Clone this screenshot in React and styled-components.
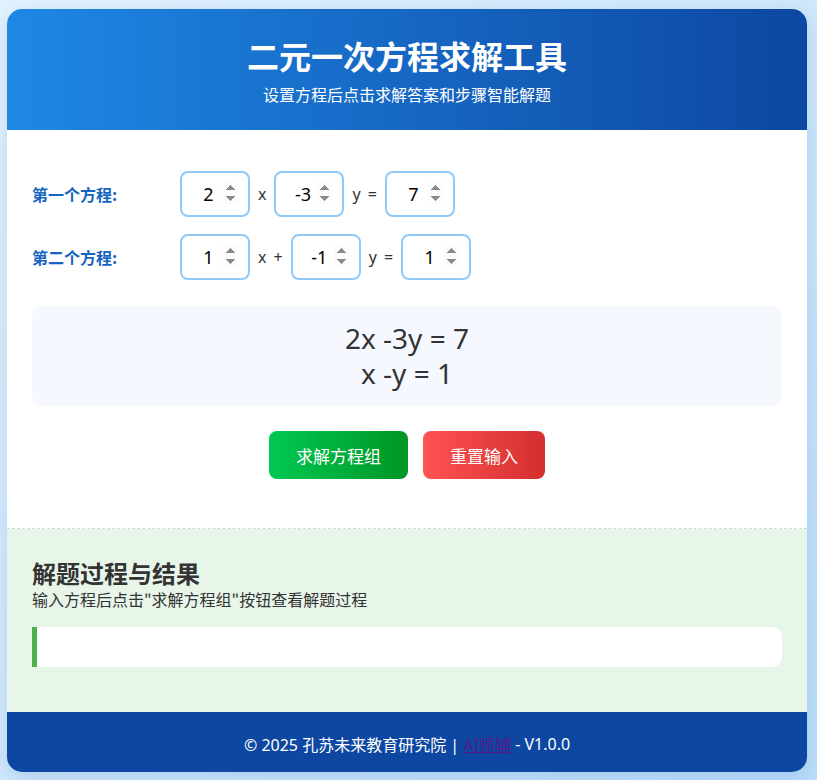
import React, { useState } from "react";
import styled, { createGlobalStyle } from "styled-components";

const GlobalStyle = createGlobalStyle`
  * { box-sizing: border-box; }
  html, body {
    margin: 0;
    padding: 0;
  }
  body {
    font-family: "Noto Sans", "Noto Sans CJK SC", sans-serif;
    background: linear-gradient(135deg, #e3f2fd 0%, #bbdefb 100%);
    min-height: 780px;
    color: #333;
  }
`;

const Page = styled.div`
  padding: 9px 10px 8px 7px;
`;

const Container = styled.div`
  width: 800px;
  background: #fff;
  border-radius: 15px;
  overflow: hidden;
  box-shadow: 0 6px 20px rgba(13, 71, 161, 0.15);
`;

const Header = styled.header`
  height: 121px;
  background: linear-gradient(90deg, #1e88e5 0%, #0d47a1 100%);
  color: #fff;
  text-align: center;
  display: flex;
  flex-direction: column;
  align-items: center;
  justify-content: center;
  padding-bottom: 3px;
`;

const Title = styled.h1`
  margin: 0;
  font-size: 32px;
  font-weight: 700;
  line-height: 48px;
  font-family: "Noto Sans CJK SC", sans-serif;
`;

const Subtitle = styled.p`
  margin: 3px 0 0;
  font-size: 16px;
  line-height: 24px;
  font-family: "Noto Sans CJK SC", sans-serif;
`;

const Main = styled.section`
  padding: 41px 25px 49px;
  display: flex;
  flex-direction: column;
  border-bottom: 1px dashed #d7d7d7;
`;

const Row = styled.div`
  display: flex;
  align-items: center;
  gap: 8px;
  margin-bottom: ${(p) => (p.$last ? "26px" : "17px")};
`;

const Label = styled.label`
  width: 140px;
  font-size: 16px;
  font-weight: 700;
  color: #1565c0;
  font-family: "Noto Sans CJK SC", sans-serif;
`;

const NumInput = styled.input`
  width: 70px;
  height: 46px;
  border: 2px solid #90caf9;
  border-radius: 8px;
  font-size: 18px;
  font-family: "Noto Sans", sans-serif;
  text-align: center;
  color: #000;
  padding: 0 10px 0 12px;
  outline: none;
  background: #fff;

  &::-webkit-inner-spin-button,
  &::-webkit-outer-spin-button {
    opacity: 1;
    height: 22px;
  }
`;

const Op = styled.span`
  font-size: 16px;
  word-spacing: 3px;
  color: #333;
`;

const Display = styled.div`
  background: #f5f9ff;
  border-radius: 10px;
  padding: 15px;
  text-align: center;
  font-size: 28px;
  line-height: 35px;
  color: #333;
  margin-bottom: 25px;
`;

const Buttons = styled.div`
  display: flex;
  justify-content: center;
  gap: 15px;
`;

const Button = styled.button`
  height: 48px;
  padding: 0 27px;
  border: none;
  border-radius: 8px;
  color: #fff;
  font-size: 17px;
  font-family: "Noto Sans CJK SC", sans-serif;
  cursor: pointer;
  background: ${(p) =>
    p.$variant === "reset"
      ? "linear-gradient(90deg, #ff5252 0%, #d32f2f 100%)"
      : "linear-gradient(90deg, #00c853 0%, #009624 100%)"};
`;

const Result = styled.section`
  background: #e8f5e9;
  padding: 28px 25px 45px;
`;

const ResultTitle = styled.h2`
  margin: 0;
  font-size: 24px;
  line-height: 32px;
  font-weight: 700;
  color: #333;
  font-family: "Noto Sans CJK SC", sans-serif;
`;

const ResultHint = styled.p`
  margin: 0 0 17px;
  font-size: 16px;
  line-height: 21px;
  color: #333;
  font-family: "Noto Sans CJK SC", sans-serif;
`;

const ResultBox = styled.div`
  height: 40px;
  background: #fff;
  border-radius: 0 10px 10px 0;
  border-left: 5px solid #4caf50;
`;

const Footer = styled.footer`
  height: 60px;
  background: #0d47a1;
  color: #fff;
  font-size: 16px;
  display: flex;
  align-items: center;
  justify-content: center;
  padding-top: 4px;
  font-family: "Noto Sans", "Noto Sans CJK SC", sans-serif;

  a {
    color: #551a8b;
    text-decoration: underline;
  }
`;

function formatTerm(coef, variable, first) {
  if (coef === 1) return (first ? "" : "+") + variable;
  if (coef === -1) return "-" + variable;
  if (coef < 0) return `${coef}${variable}`;
  return (first ? "" : "+") + `${coef}${variable}`;
}

function equation(a, b, c) {
  return `${formatTerm(a, "x", true)} ${formatTerm(b, "y", false)} = ${c}`;
}

export default function App() {
  const [eq1, setEq1] = useState({ a: 2, b: -3, c: 7 });
  const [eq2, setEq2] = useState({ a: 1, b: -1, c: 1 });

  const update = (setter) => (key) => (e) =>
    setter((prev) => ({ ...prev, [key]: Number(e.target.value) }));
  const u1 = update(setEq1);
  const u2 = update(setEq2);

  return (
    <Page>
      <GlobalStyle />
      <Container>
        <Header>
          <Title>二元一次方程求解工具</Title>
          <Subtitle>设置方程后点击求解答案和步骤智能解题</Subtitle>
        </Header>

        <Main>
          <Row>
            <Label>第一个方程:</Label>
            <NumInput type="number" value={eq1.a} onChange={u1("a")} />
            <Op>x</Op>
            <NumInput type="number" value={eq1.b} onChange={u1("b")} />
            <Op>y =</Op>
            <NumInput type="number" value={eq1.c} onChange={u1("c")} />
          </Row>
          <Row $last>
            <Label>第二个方程:</Label>
            <NumInput type="number" value={eq2.a} onChange={u2("a")} />
            <Op>x +</Op>
            <NumInput type="number" value={eq2.b} onChange={u2("b")} />
            <Op>y =</Op>
            <NumInput type="number" value={eq2.c} onChange={u2("c")} />
          </Row>

          <Display>
            <div>{equation(eq1.a, eq1.b, eq1.c)}</div>
            <div>{equation(eq2.a, eq2.b, eq2.c)}</div>
          </Display>

          <Buttons>
            <Button>求解方程组</Button>
            <Button $variant="reset">重置输入</Button>
          </Buttons>
        </Main>

        <Result>
          <ResultTitle>解题过程与结果</ResultTitle>
          <ResultHint>输入方程后点击"求解方程组"按钮查看解题过程</ResultHint>
          <ResultBox />
        </Result>

        <Footer>
          © 2025 孔苏未来教育研究院 |&nbsp;<a href="#">AI师辅</a>&nbsp;- V1.0.0
        </Footer>
      </Container>
    </Page>
  );
}
